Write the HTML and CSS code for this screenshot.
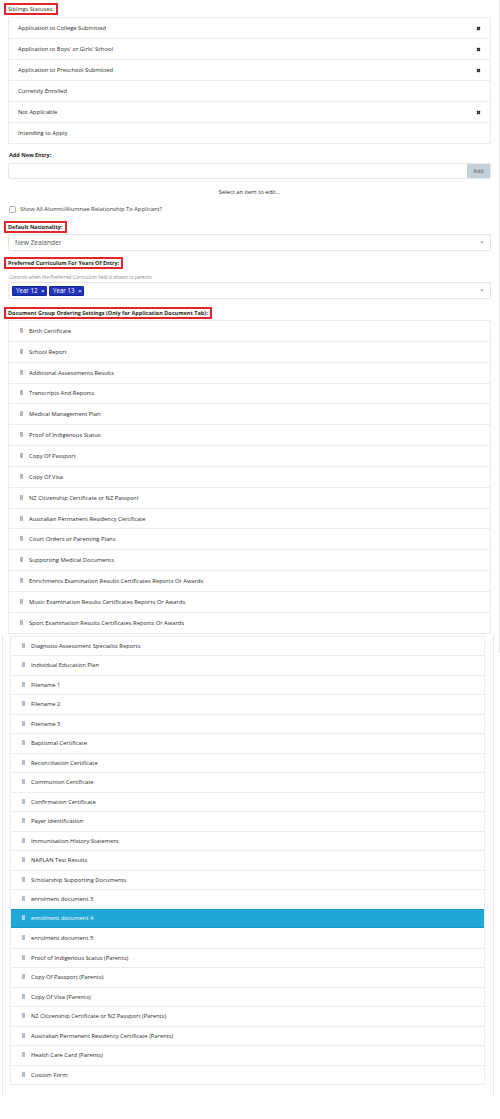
FILE: index.html
```html
<!DOCTYPE html>
<html>
<head>
<meta charset="utf-8">
<link rel="stylesheet" href="styles.css">
</head>
<body>
<div class="page">
  <div class="redlabel plain">Siblings Statuses:</div>
  <ul class="slist">
    <li><span>Application to College Submitted</span><svg class="x" viewBox="0 0 10 10"><path d="M2 2L8 8M8 2L2 8"/></svg></li>
    <li><span>Application to Boys' or Girls' School</span><svg class="x" viewBox="0 0 10 10"><path d="M2 2L8 8M8 2L2 8"/></svg></li>
    <li><span>Application to Preschool Submitted</span><svg class="x" viewBox="0 0 10 10"><path d="M2 2L8 8M8 2L2 8"/></svg></li>
    <li><span>Currently Enrolled</span></li>
    <li><span>Not Applicable</span><svg class="x" viewBox="0 0 10 10"><path d="M2 2L8 8M8 2L2 8"/></svg></li>
    <li><span>Intending to Apply</span></li>
  </ul>
  <div class="boldlabel">Add New Entry:</div>
  <div class="addrow"><div class="input"></div><div class="btn">Add</div></div>
  <div class="center-hint">Select an item to edit...</div>
  <div class="check"><span class="box"></span><span>Show All Alumni/Alumnae Relationship To Applicant?</span></div>
  <div class="redlabel nat">Default Nationality:</div>
  <div class="select"><span class="val">New Zealander</span><svg class="caret" viewBox="0 0 6 4"><path d="M0.5 0.5H5.5L3 3.5Z"/></svg></div>
  <div class="redlabel cur">Preferred Curriculum For Years Of Entry:</div>
  <div class="note">Controls when the Preferred Curriculum field is shown to parents</div>
  <div class="select multi">
    <span class="tag">Year 12 <span class="tx">×</span></span>
    <span class="tag">Year 13 <span class="tx">×</span></span>
    <svg class="caret" viewBox="0 0 6 4"><path d="M0.5 0.5H5.5L3 3.5Z"/></svg>
  </div>
  <div class="redlabel doc">Document Group Ordering Settings (Only for Application Document Tab):</div>
  <ul class="dlist">
    <li><i class="grip"></i>Birth Certificate</li>
    <li><i class="grip"></i>School Report</li>
    <li><i class="grip"></i>Additional Assessments Results</li>
    <li><i class="grip"></i>Transcripts And Reports</li>
    <li><i class="grip"></i>Medical Management Plan</li>
    <li><i class="grip"></i>Proof of Indigenous Status</li>
    <li><i class="grip"></i>Copy Of Passport</li>
    <li><i class="grip"></i>Copy Of Visa</li>
    <li><i class="grip"></i>NZ Citizenship Certificate or NZ Passport</li>
    <li><i class="grip"></i>Australian Permanent Residency Certificate</li>
    <li><i class="grip"></i>Court Orders or Parenting Plans</li>
    <li><i class="grip"></i>Supporting Medical Documents</li>
    <li><i class="grip"></i>Enrichments Examination Results Certificates Reports Or Awards</li>
    <li><i class="grip"></i>Music Examination Results Certificates Reports Or Awards</li>
    <li><i class="grip"></i>Sport Examination Results Certificates Reports Or Awards</li>
  </ul>
</div>
<div class="ghost">
  <ul class="dlist second">
    <li><i class="grip"></i>Diagnosis-Assessment Specialist Reports</li>
    <li><i class="grip"></i>Individual Education Plan</li>
    <li><i class="grip"></i>Filename 1</li>
    <li><i class="grip"></i>Filename 2</li>
    <li><i class="grip"></i>Filename 3</li>
    <li><i class="grip"></i>Baptismal Certificate</li>
    <li><i class="grip"></i>Reconciliation Certificate</li>
    <li><i class="grip"></i>Communion Certificate</li>
    <li><i class="grip"></i>Confirmation Certificate</li>
    <li><i class="grip"></i>Payer Identification</li>
    <li><i class="grip"></i>Immunisation History Statement</li>
    <li><i class="grip"></i>NAPLAN Test Results</li>
    <li><i class="grip"></i>Scholarship Supporting Documents</li>
    <li><i class="grip"></i>enrolment document 3</li>
    <li class="active"><i class="grip"></i>enrolment document 4</li>
    <li><i class="grip"></i>enrolment document 5</li>
    <li><i class="grip"></i>Proof of Indigenous Status (Parents)</li>
    <li><i class="grip"></i>Copy Of Passport (Parents)</li>
    <li><i class="grip"></i>Copy Of Visa (Parents)</li>
    <li><i class="grip"></i>NZ Citizenship Certificate or NZ Passport (Parents)</li>
    <li><i class="grip"></i>Australian Permanent Residency Certificate (Parents)</li>
    <li><i class="grip"></i>Health Care Card (Parents)</li>
    <li><i class="grip"></i>Custom Form</li>
  </ul>
</div>
</body>
</html>
```

FILE: styles.css
```css
* { box-sizing: border-box; }
html, body { margin: 0; padding: 0; }
body {
  width: 500px;
  min-height: 1119px;
  background: #fff linear-gradient(#e6e6e6, #e6e6e6) no-repeat 499px 0 / 1px 653px;
  font-family: "Open Sans", "Noto Sans", sans-serif;
  font-size: 5.8px;
  color: #2a2a2a;
}
ul { list-style: none; margin: 0; padding: 0; }

.page {
  display: flex;
  flex-direction: column;
  padding: 3px 9px 0 8px;
}

.redlabel {
  align-self: flex-start;
  margin-left: -4px;
  height: 12px;
  border: 2px solid #e2242d;
  padding: 0 2px;
  line-height: 8px;
  font-weight: 700;
  font-size: 5.5px;
  color: #1e1e1e;
  white-space: nowrap;
}
.redlabel.plain { font-weight: 400; font-size: 5.7px; color: #2a2a2a; }

.slist {
  margin-top: 2px;
  border: 1px solid #ececec;
  border-top: 0;
}
.slist li {
  height: 21px;
  border-top: 1px solid #ececec;
  display: flex;
  align-items: center;
  justify-content: space-between;
  padding: 0 9px 0 9px;
}
.x { width: 5px; height: 5px; }
.x path { stroke: #1a1a1a; stroke-width: 2.6; fill: none; }

.boldlabel {
  margin-top: 6px;
  line-height: 10px;
  font-weight: 700;
  font-size: 5.5px;
  color: #1e1e1e;
  padding-left: 1px;
}
.addrow {
  margin-top: 3px;
  height: 16px;
  display: flex;
  border: 1px solid #e6e6e6;
  border-radius: 2px;
  overflow: hidden;
}
.input { flex: 1; }
.btn {
  width: 23px;
  background: #c5cfd8;
  color: #6c737a;
  font-weight: 600;
  font-size: 5.4px;
  display: flex;
  align-items: center;
  justify-content: center;
}
.center-hint {
  margin-top: 7px;
  line-height: 12px;
  text-align: center;
}
.check {
  margin-top: 5px;
  height: 12px;
  display: flex;
  align-items: center;
  gap: 4px;
  padding-left: 1px;
  color: #3a3a3a;
}
.box {
  width: 7px;
  height: 7px;
  border: 1px solid #a9a9a9;
  border-radius: 1.5px;
  background: #fff;
}
.redlabel.nat { margin-top: 6px; }
.select {
  margin-top: 1px;
  height: 17px;
  border: 1px solid #e3e3e3;
  border-radius: 2px;
  display: flex;
  align-items: center;
  padding: 0 6px 0 6px;
}
.val { flex: 1; font-size: 6.6px; color: #555; }
.caret { width: 4px; height: 3px; margin-left: auto; }
.caret path { fill: #999; }
.redlabel.cur { margin-top: 6px; }
.note {
  margin-top: 4px;
  line-height: 9px;
  font-size: 4.7px;
  color: #8a8a8a;
  padding-left: 1px;
}
.select.multi { margin-top: 0; padding-left: 3px; gap: 2px; }
.tag {
  height: 10px;
  width: 35px;
  background: #2133b8;
  border: 1px solid #17259c;
  color: #fff;
  font-size: 6.2px;
  line-height: 8px;
  padding-left: 3px;
  border-radius: 1px;
  white-space: nowrap;
}
.tx { font-size: 5.5px; margin-left: 2px; font-weight: 700; }
.redlabel.doc { margin-top: 8px; }

.dlist {
  margin-top: 1px;
  border: 1px solid #ececec;
  border-top: 0;
}
.dlist li {
  height: 20.85px;
  border-top: 1px solid #ececec;
  display: flex;
  align-items: center;
  padding-left: 11px;
  white-space: nowrap;
}
.grip {
  width: 3px;
  height: 5px;
  margin-right: 6px;
  margin-top: -1px;
  background-image: radial-gradient(circle, #9c9c9c 0.5px, transparent 0.7px);
  background-size: 1.5px 1.67px;
}

.ghost {
  margin: 1px 6px 0 2px;
  border-left: 1px solid #e6e6e6;
  border-right: 1px solid #e6e6e6;
  padding: 1px 8px 12px 7px;
}
.dlist.second { margin-top: 0; }
.dlist.second li { height: 19.5px; padding-left: 11px; }
.dlist li.active {
  background: #21a8d8;
  border-top: 1px solid #1896c6;
  border-bottom: 1px solid #1896c6;
  color: #fff;
}
.dlist li.active .grip {
  background-image: radial-gradient(circle, #d8eef8 0.5px, transparent 0.7px);
}
.dlist li.active + li { border-top: 0; }
```
